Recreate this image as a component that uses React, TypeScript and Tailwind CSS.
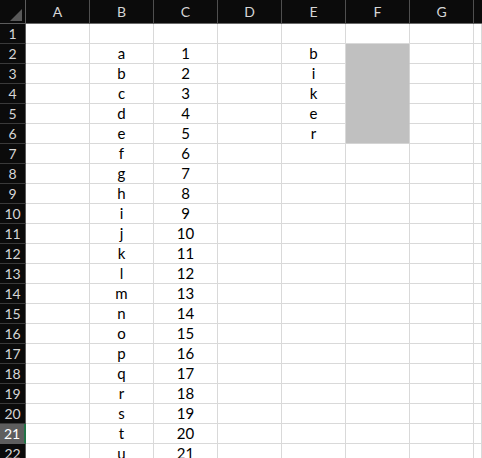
import React from 'react';

const COLS = ['A', 'B', 'C', 'D', 'E', 'F', 'G', ''];
const LETTERS = 'abcdefghijklmnopqrstu'.split('');
const WORD = ['b', 'i', 'k', 'e', 'r'];
const ROW_COUNT = 22;

function cellValue(row: number, col: number): string {
  // row is 1-based, col is 0-based (A = 0)
  if (col === 1 && row >= 2) return LETTERS[row - 2] ?? '';
  if (col === 2 && row >= 2) return String(row - 1);
  if (col === 4 && row >= 2 && row <= 6) return WORD[row - 2];
  return '';
}

export default function App() {
  const rows = Array.from({ length: ROW_COUNT }, (_, i) => i + 1);

  return (
    <div className="w-[482px] h-[458px] overflow-hidden bg-white font-['Lato','Open_Sans',sans-serif] text-[15px] text-black">
      {/* Column headers */}
      <div className="flex h-[24px]">
        <div className="w-[26px] shrink-0 bg-[#0b0b0b] border-r border-b border-[#5c5c5c] flex items-end justify-end pr-[3px] pb-[2px]">
          <svg width="12" height="12" viewBox="0 0 12 12">
            <polygon points="12,0 12,12 0,12" fill="#595959" />
          </svg>
        </div>
        {COLS.map((c, i) => (
          <div
            key={i}
            className={`shrink-0 bg-[#0b0b0b] border-b border-[#6a6a6a] flex items-center justify-center text-[#d6d6d6] text-[14px] ${
              i < COLS.length - 1 ? 'w-[64px] border-r border-r-[#4f4f4f]' : 'flex-1'
            }`}
          >
            {c}
          </div>
        ))}
      </div>

      {/* Rows */}
      {rows.map(r => {
        const active = r === 21;
        return (
          <div key={r} className="flex h-[20px]">
            <div
              className={`w-[26px] shrink-0 border-b flex items-center justify-center text-[14px] ${
                active
                  ? 'bg-[#5e5e5e] text-white border-b-[#5e5e5e] border-r-2 border-r-[#217346]'
                  : 'bg-[#0b0b0b] text-[#d6d6d6] border-b-[#3a3a3a] border-r border-r-[#5c5c5c]'
              }`}
            >
              {r}
            </div>
            {COLS.map((_, c) => {
              const shaded = c === 5 && r >= 2 && r <= 6;
              const last = c === COLS.length - 1;
              return (
                <div
                  key={c}
                  className={`shrink-0 flex items-center justify-center leading-none ${
                    last ? 'flex-1' : 'w-[64px]'
                  } ${
                    shaded
                      ? `bg-[#c0c0c0] ${r < 6 ? 'border-b border-b-[#c0c0c0]' : 'border-b border-b-[#d4d4d4]'} border-r border-r-[#d4d4d4]`
                      : 'border-b border-r border-[#d9d9d9]'
                  }`}
                >
                  {cellValue(r, c)}
                </div>
              );
            })}
          </div>
        );
      })}
    </div>
  );
}
